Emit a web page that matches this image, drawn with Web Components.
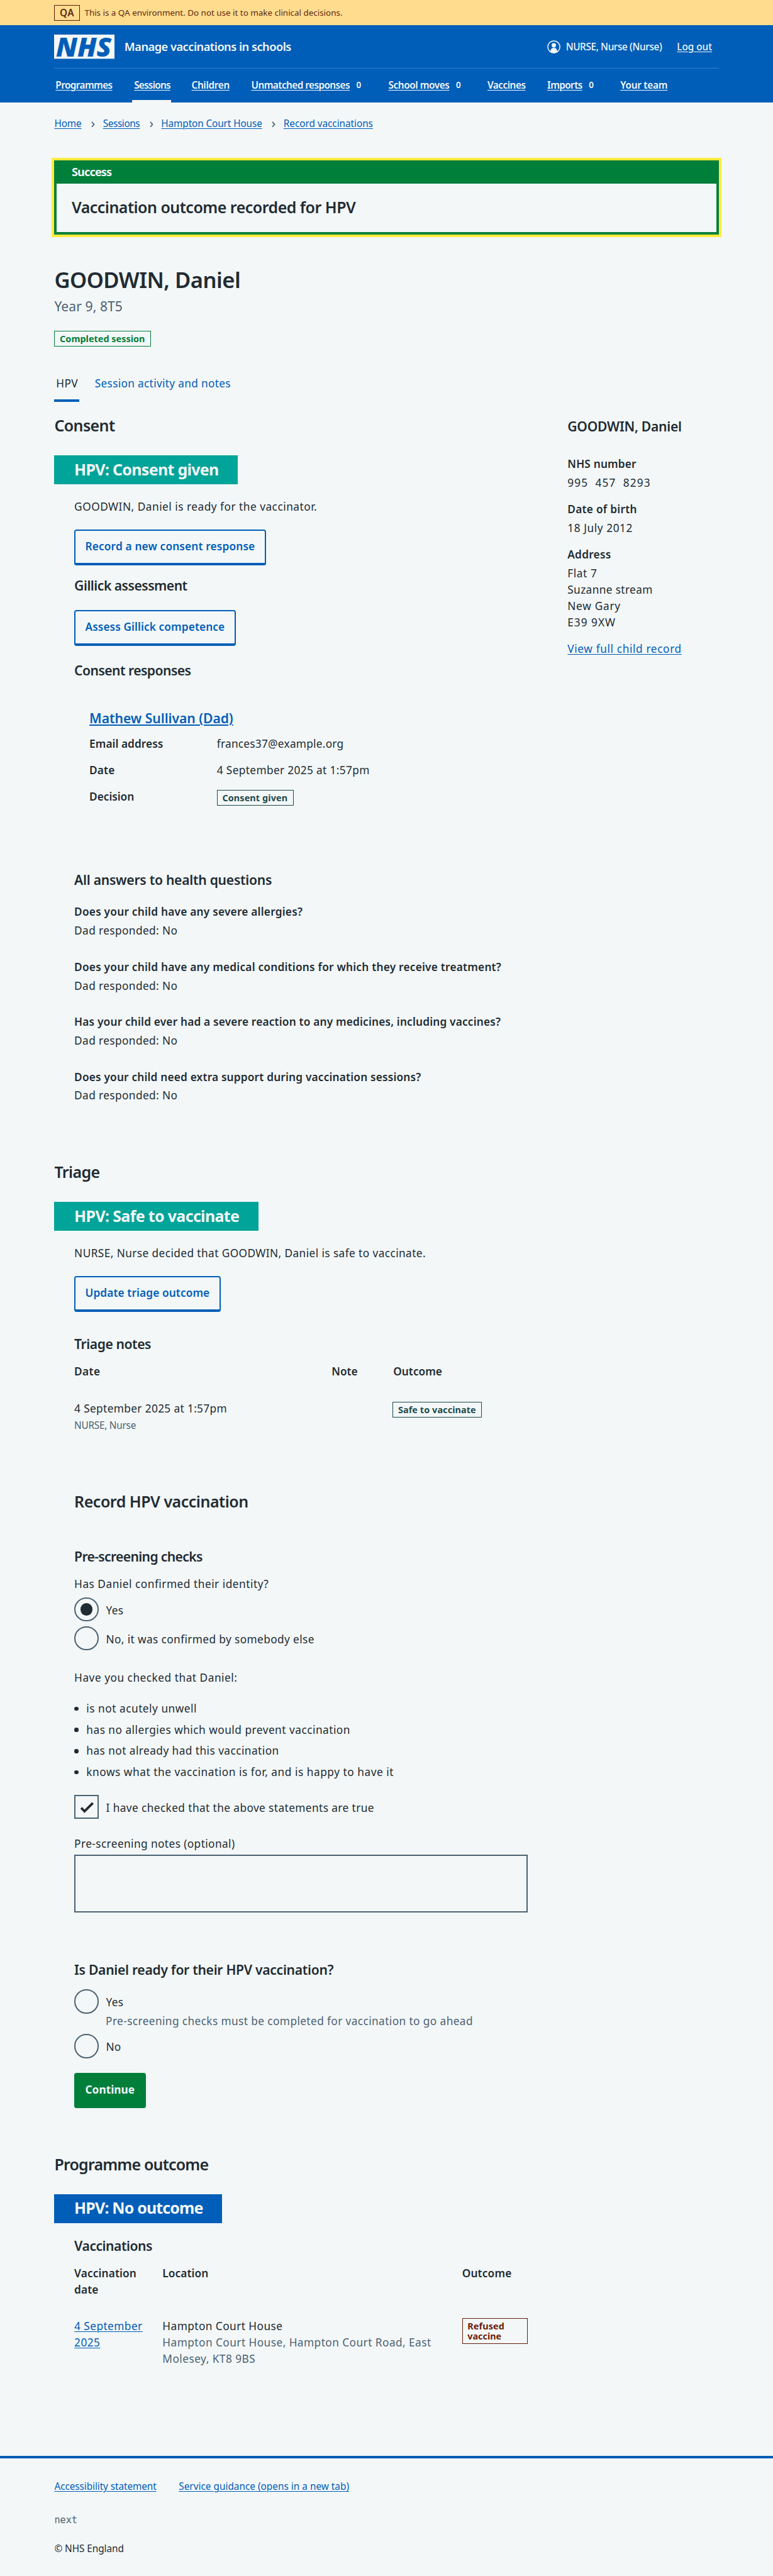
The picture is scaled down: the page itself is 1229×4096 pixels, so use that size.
<!DOCTYPE html>
<html lang="en">
<head>
<meta charset="utf-8">
<title>Manage vaccinations in schools</title>
<style>
  html, body { margin: 0; padding: 0; background: #f3f7f8; }
  body { height: 4096px; overflow: hidden; }
</style>
</head>
<body>
<app-page>
  <qa-banner></qa-banner>
  <app-header></app-header>
  <page-width>
    <app-breadcrumb></app-breadcrumb>
    <success-banner>
      <ui-text slot="title" k="m" w="65" b="700" tone="paper">Success</ui-text>
      <ui-text k="l" w="469" b="600">Vaccination outcome recorded for HPV</ui-text>
    </success-banner>
    <ui-text k="xl" w="307" b="600" mt="53.5">GOODWIN, Daniel</ui-text>
    <ui-text k="h" w="112" tone="muted" mt="7.5">Year 9, 8T5</ui-text>
    <ui-tag mt="25" w="140" tone="green">Completed session</ui-tag>
    <tab-bar></tab-bar>
    <page-columns>
      <ui-text k="l" w="99" b="600" mt="22">Consent</ui-text>
      <status-card tone="teal" mt="33">
        <ui-text slot="head" k="l" w="238" b="700" tone="paper">HPV: Consent given</ui-text>
        <ui-text w="401" mt="24">GOODWIN, Daniel is ready for the vaccinator.</ui-text>
        <ui-button mt="24" w="280">Record a new consent response</ui-button>
        <ui-text k="h" w="186" b="600" mt="19">Gillick assessment</ui-text>
        <ui-button mt="25" w="230">Assess Gillick competence</ui-button>
        <ui-text k="h" w="192" b="600" mt="27">Consent responses</ui-text>
        <consent-response></consent-response>
        <ui-text k="h" w="326" b="600" mt="109">All answers to health questions</ui-text>
        <ui-text w="377" b="600" mt="25">Does your child have any severe allergies?</ui-text>
        <ui-text w="170" mt="4">Dad responded: No</ui-text>
        <ui-text w="706" b="600" mt="33">Does your child have any medical conditions for which they receive treatment?</ui-text>
        <ui-text w="170" mt="4">Dad responded: No</ui-text>
        <ui-text w="705" b="600" mt="33">Has your child ever had a severe reaction to any medicines, including vaccines?</ui-text>
        <ui-text w="170" mt="4">Dad responded: No</ui-text>
        <ui-text w="573" b="600" mt="33">Does your child need extra support during vaccination sessions?</ui-text>
        <ui-text w="170" mt="4">Dad responded: No</ui-text>
      </status-card>
      <ui-text k="l" w="74" b="600" mt="95.5">Triage</ui-text>
      <status-card tone="teal" mt="32.5">
        <ui-text slot="head" k="l" w="272" b="700" tone="paper">HPV: Safe to vaccinate</ui-text>
        <ui-text w="581" mt="24">NURSE, Nurse decided that GOODWIN, Daniel is safe to vaccinate.</ui-text>
        <ui-button mt="24" w="205">Update triage outcome</ui-button>
        <ui-text k="h" w="126" b="600" mt="39">Triage notes</ui-text>
        <ui-grid cols="426px 102px auto" mt="17">
          <ui-text w="42" b="600">Date</ui-text><ui-text w="42" b="600">Note</ui-text><ui-text w="80" b="600">Outcome</ui-text>
        </ui-grid>
        <ui-grid cols="425px 102px auto" mt="34">
          <ui-group>
            <ui-text w="252">4 September 2025 at 1:57pm</ui-text>
            <ui-text k="s" w="101" tone="muted" mt="2.5">NURSE, Nurse</ui-text>
          </ui-group>
          <ui-group></ui-group>
          <ui-tag w="128" mt="2" tone="aqua">Safe to vaccinate</ui-tag>
        </ui-grid>
        <ui-text k="l" w="287" b="600" mt="97">Record HPV vaccination</ui-text>
        <ui-text k="h" w="211" b="600" mt="59.5">Pre-screening checks</ui-text>
        <ui-text w="321" mt="17">Has Daniel confirmed their identity?</ui-text>
        <ui-choice kind="radio" checked mt="8"><ui-text w="28">Yes</ui-text></ui-choice>
        <ui-choice kind="radio" mt="8"><ui-text w="344">No, it was confirmed by somebody else</ui-text></ui-choice>
        <ui-text w="269" mt="32">Have you checked that Daniel:</ui-text>
        <bullet-item mt="24"><ui-text w="182">is not acutely unwell</ui-text></bullet-item>
        <bullet-item mt="8"><ui-text w="436">has no allergies which would prevent vaccination</ui-text></bullet-item>
        <bullet-item mt="8"><ui-text w="318">has not already had this vaccination</ui-text></bullet-item>
        <bullet-item mt="8"><ui-text w="508">knows what the vaccination is for, and is happy to have it</ui-text></bullet-item>
        <ui-choice kind="checkbox" checked mt="24"><ui-text w="443">I have checked that the above statements are true</ui-text></ui-choice>
        <ui-text w="265" mt="28">Pre-screening notes (optional)</ui-text>
        <notes-field mt="4"></notes-field>
        <ui-text k="h" w="428" b="600" mt="80">Is Daniel ready for their HPV vaccination?</ui-text>
        <ui-choice kind="radio" mt="17"><ui-text w="28">Yes</ui-text></ui-choice>
        <ui-hint><ui-text w="607" tone="muted">Pre-screening checks must be completed for vaccination to go ahead</ui-text></ui-hint>
        <ui-choice kind="radio" mt="8"><ui-text w="24">No</ui-text></ui-choice>
        <ui-button primary mt="24" w="81">Continue</ui-button>
      </status-card>
      <ui-text k="l" w="254" b="600" mt="75.5">Programme outcome</ui-text>
      <status-card tone="blue" mt="32.5">
        <ui-text slot="head" k="l" w="212" b="700" tone="paper">HPV: No outcome</ui-text>
        <ui-text k="h" w="128" b="600" mt="23">Vaccinations</ui-text>
        <ui-grid cols="146px 496px 109px" mt="17">
          <ui-group><ui-text w="102" b="600">Vaccination</ui-text><ui-text w="39" b="600">date</ui-text></ui-group>
          <ui-text w="75" b="600">Location</ui-text><ui-text w="81" b="600">Outcome</ui-text>
        </ui-grid>
        <ui-grid cols="146px 496px 109px" mt="34">
          <ui-group><ui-text w="112" tone="link">4 September</ui-text><ui-text w="42" tone="link">2025</ui-text></ui-group>
          <ui-group>
            <ui-text w="198">Hampton Court House</ui-text>
            <ui-text w="444" tone="muted">Hampton Court House, Hampton Court Road, East</ui-text>
            <ui-text w="153" tone="muted">Molesey, KT8 9BS</ui-text>
          </ui-group>
          <ui-tag tone="red" wide w="60"><ui-text k="t" b="700" w="60">Refused</ui-text><ui-text k="t" b="700" w="55">vaccine</ui-text></ui-tag>
        </ui-grid>
      </status-card>
      <child-summary slot="aside"></child-summary>
    </page-columns>
  </page-width>
  <app-footer></app-footer>
</app-page>

<script>
const tones = { ink: '#212b32', muted: '#4c6272', paper: '#f3f7f8', link: '#005eb8', blue: '#005eb8', green: '#007f3b', teal: '#00a499', aqua: '#1d4a4b', red: '#6b1d0a' };

function define(name, html, setup) {
  const tpl = document.createElement('template');
  tpl.innerHTML = '<style>:host{display:block;box-sizing:border-box}*{box-sizing:border-box}</style>' + html;
  customElements.define(name, class extends HTMLElement {
    connectedCallback() {
      if (this.shadowRoot) return;
      this.attachShadow({ mode: 'open' }).append(tpl.content.cloneNode(true));
      if (this.hasAttribute('mt')) this.style.marginTop = this.getAttribute('mt') + 'px';
      const t = this.getAttribute('tone');
      if (t) this.style.setProperty('--tone', tones[t]);
      if (setup) setup(this, this.shadowRoot);
    }
  });
}

/* Tracks a line of text so that it sets to the given measure. */
function track(span, text, width) {
  const probe = document.createElement('span');
  probe.style.cssText = 'display:block;width:100px;height:0;overflow:hidden';
  document.querySelector('app-page').append(probe);
  const f = probe.getBoundingClientRect().width / 100;
  probe.remove();
  span.style.letterSpacing = '0px';
  const now = span.getBoundingClientRect().width / f;
  if (now > 0) span.style.letterSpacing = ((width + 1 - now) / text.length).toFixed(4) + 'px';
}

define('app-page', `<style>
  :host{zoom:.9604;height:4266px;color:#212b32;background:#f3f7f8;font:400 18px/27px "Noto Sans","Open Sans",sans-serif}
</style><slot></slot>`);

define('page-width', `<style>:host{width:1100px;margin:0 auto 0 90px}</style><slot></slot>`);

define('ui-text', `<style>
  :host{color:var(--tone,#212b32);white-space:nowrap;font-size:18px;line-height:27px}
  :host([k=xl]){font-size:36px;line-height:44px}
  :host([k=l]){font-size:26px;line-height:34px}
  :host([k=h]){font-size:22px;line-height:30px}
  :host([k=m]){font-size:19px;line-height:38px}
  :host([k=s]){font-size:16px;line-height:24px}
  :host([k=q]){font-size:14px;line-height:24px}
  :host([k=t]){font-size:15px;line-height:16px;color:inherit}
  :host([tone=link]) span,:host([u]) span{text-decoration:underline;text-decoration-thickness:1.1px;text-underline-offset:2px}
  :host([k=h][tone=link]) span{text-decoration-thickness:2px}
</style><span><slot></slot></span>`, (el, root) => {
  const span = root.querySelector('span');
  if (el.hasAttribute('b')) el.style.fontWeight = el.getAttribute('b');
  if (el.getAttribute('w')) track(span, el.textContent, +el.getAttribute('w'));
});

define('ui-tag', `<style>
  :host{width:fit-content;height:26px;border:1.1px solid var(--tone);color:var(--tone);padding:0 9px 0 8px;font:700 15px/25px "Noto Sans";white-space:nowrap}
  :host([wide]){width:109px;height:42px;padding-top:4px;line-height:16px}
</style><span><slot></slot></span>`, (el, root) => {
  if (!el.hasAttribute('wide')) track(root.querySelector('span'), el.textContent, +el.getAttribute('w'));
});

define('ui-button', `<style>
  :host{width:fit-content;height:59px;border:2.1px solid #005eb8;border-bottom-width:4.2px;border-radius:4px;color:#005eb8;padding:0 16px;font-weight:600;font-size:18px;line-height:53px;white-space:nowrap}
  :host([primary]){background:#007f3b;border-color:#007f3b;color:#f3f7f8;font-weight:700}
</style><span><slot></slot></span>`, (el, root) => track(root.querySelector('span'), el.textContent, +el.getAttribute('w')));

define('ui-grid', `<style>:host{display:grid;align-items:start}</style><slot></slot>`,
  el => { el.style.gridTemplateColumns = el.getAttribute('cols'); });
define('ui-group', `<slot></slot>`);
define('ui-hint', `<style>:host{margin:-1px 0 0 52px}</style><slot></slot>`);

define('status-card', `<style>
  header{width:fit-content;height:48px;padding:6px 32px 0 33px;background:var(--tone)}
  .body{padding-left:33px}
</style><header><slot name="head"></slot></header><div class="body"><slot></slot></div>`,
  el => { for (const c of el.children) if (!c.hasAttribute('tone')) c.style.setProperty('--tone', '#212b32'); });

define('ui-choice', `<style>
  :host{display:flex;gap:12.5px;height:40px}
  .box{width:40px;height:40px;border:2.1px solid #4c6272;display:grid;place-items:center}
  :host([kind=radio]) .box{border-radius:50%}
  svg{display:none;width:36px;height:36px;flex:none}
  :host([kind=checkbox][checked]) svg{display:block}
  .dot{display:none;width:20px;height:20px;border-radius:50%;background:#212b32}
  :host([kind=radio][checked]) .dot{display:block}
  .label{padding-top:8px}
</style><div class="box"><i class="dot"></i><svg viewBox="0 0 36 36"><path d="M9.5 19.5 15 25 28.8 11.3" fill="none" stroke="#212b32" stroke-width="4"/></svg></div><div class="label"><slot></slot></div>`);

define('bullet-item', `<style>
  :host{display:flex;align-items:center;gap:13px}
  i{width:7px;height:7px;border-radius:50%;background:#212b32}
</style><i></i><slot></slot>`);

define('notes-field', `<style>:host{width:751px;height:96px;border:2.1px solid #4c6272}</style>`);

define('page-columns', `<style>
  :host{display:grid;grid-template-columns:849.5px 250.5px;align-items:start}
</style><main><slot></slot></main><aside><slot name="aside"></slot></aside>`);

define('qa-banner', `<style>
  :host{display:flex;align-items:center;gap:8px;height:42px;padding-left:90px;background:#ffdc8e;--tone:#5c2a12}
  .tag{height:26px;width:42px;border:1.1px solid #5c1a0a;display:grid;place-items:center}
  .tag ui-text{line-height:24px}
</style><div class="tag"><ui-text k="s" w="23" b="600">QA</ui-text></div><ui-text k="q" w="426">This is a QA environment. Do not use it to make clinical decisions.</ui-text>`);

define('app-header', `<style>
  :host{height:128px;background:#005eb8;padding:0 90px;--tone:#f3f7f8}
  .top{display:flex;align-items:center;height:72px;border-bottom:1.1px solid rgba(255,255,255,.2)}
  .logo{width:100px;height:40px;display:block;overflow:visible}
  .name{margin-left:16px}
  .user{display:flex;align-items:center;margin:0 11px 0 auto}
  .user svg{width:22px;height:22px;margin-right:9px}
  .out{margin-left:25px}
  nav{display:grid;grid-template-columns:130px 95px 99px 227px 164px 99px 121px auto;margin-left:2px}
  .item{display:flex;gap:11px;height:56px;padding-top:15px}
  .item.on{margin-left:-3px;padding-left:3px;width:64px;border-bottom:4.2px solid #f3f7f8}
</style>
<div class="top">
  <svg class="logo" viewBox="0 0 100 40"><rect width="100" height="40" fill="#f3f7f8"/><text x="3" y="36" font-family="Noto Sans" font-weight="900" font-style="italic" font-size="45" textLength="92" lengthAdjust="spacingAndGlyphs" fill="#005eb8">NHS</text></svg>
  <ui-text class="name" k="m" w="275" b="600">Manage vaccinations in schools</ui-text>
  <div class="user">
    <svg viewBox="0 0 22 22"><circle cx="11" cy="11" r="10" fill="none" stroke="#f3f7f8" stroke-width="1.6"/><circle cx="11" cy="8.3" r="3.6" fill="#f3f7f8"/><path d="M5.5 19.4v-1.7a5.5 5.2 0 0 1 11 0v1.7Q11 23 5.5 19.4Z" fill="#f3f7f8"/></svg>
    <ui-text k="s" w="158" b="500">NURSE, Nurse (Nurse)</ui-text>
    <ui-text class="out" k="s" w="57" b="500" u>Log out</ui-text>
  </div>
</div>
<nav>
  <div class="item"><ui-text k="s" w="93" b="600" u>Programmes</ui-text></div>
  <div class="item on"><ui-text k="s" w="59" b="600" u>Sessions</ui-text></div>
  <div class="item"><ui-text k="s" w="62" b="600" u>Children</ui-text></div>
  <div class="item"><ui-text k="s" w="162" b="600" u>Unmatched responses</ui-text><ui-text k="q" w="8" b="600">0</ui-text></div>
  <div class="item"><ui-text k="s" w="100" b="600" u>School moves</ui-text><ui-text k="q" w="8" b="600">0</ui-text></div>
  <div class="item"><ui-text k="s" w="62" b="600" u>Vaccines</ui-text></div>
  <div class="item"><ui-text k="s" w="57" b="600" u>Imports</ui-text><ui-text k="q" w="8" b="600">0</ui-text></div>
  <div class="item"><ui-text k="s" w="77" b="600" u>Your team</ui-text></div>
</nav>`);

define('app-breadcrumb', `<style>
  :host{display:flex;align-items:center;padding-top:23px;--tone:#005eb8}
  svg{width:6px;height:10px;margin:1px 13.500px 0 16px;fill:none;stroke:#4c6272;stroke-width:1.8;flex:none}
</style><ui-text k="s" w="44" u>Home</ui-text><svg viewBox="0 0 6 10"><path d="M1 .8 4.8 5 1 9.2"/></svg><ui-text k="s" w="60" u>Sessions</ui-text><svg viewBox="0 0 6 10"><path d="M1 .8 4.8 5 1 9.2"/></svg><ui-text k="s" w="166" u>Hampton Court House</ui-text><svg viewBox="0 0 6 10"><path d="M1 .8 4.8 5 1 9.2"/></svg><ui-text k="s" w="147" u>Record vaccinations</ui-text>`);

define('success-banner', `<style>
  :host{height:122px;margin-top:49px;border:4.2px solid #007f3b;border-top:0;outline:4.2px solid #ffeb3b}
  header{height:38px;background:#007f3b;padding-left:24.5px}
  .body{padding:22px 0 0 24.5px}
</style><header><slot name="title"></slot></header><div class="body"><slot></slot></div>`);

define('tab-bar', `<style>
  :host{display:flex;gap:23px;margin-top:47.5px}
  .tab{height:43.5px;padding:0 3px}
  .on{width:41px;border-bottom:4.2px solid #005eb8}
  .other{--tone:#005eb8}
</style><div class="tab on"><ui-text w="35">HPV</ui-text></div><div class="tab other"><ui-text w="224">Session activity and notes</ui-text></div>`);

define('consent-response', `<style>
  :host{padding:49px 0 0 25px}
  dl{display:grid;grid-template-columns:211px auto;row-gap:17px;margin:13px 0 0}
  dt,dd{margin:0;height:27px}
</style>
<ui-text k="h" w="237" b="600" tone="link">Mathew Sullivan (Dad)</ui-text>
<dl><dt><ui-text w="121" b="600">Email address</ui-text></dt><dd><ui-text w="209">frances37@example.org</ui-text></dd>
<dt><ui-text w="41" b="600">Date</ui-text></dt><dd><ui-text w="252">4 September 2025 at 1:57pm</ui-text></dd>
<dt><ui-text w="73" b="600">Decision</ui-text></dt><dd><ui-tag mt="2" tone="aqua" w="107">Consent given</ui-tag></dd></dl>`);

define('child-summary', `<style>:host{padding-top:27px}</style>
<ui-text k="h" w="188" b="600">GOODWIN, Daniel</ui-text>
<ui-text w="113" b="600" mt="33">NHS number</ui-text><ui-text w="137" mt="4">995&nbsp; 457&nbsp; 8293</ui-text>
<ui-text w="114" b="600" mt="17">Date of birth</ui-text><ui-text w="107" mt="4">18 July 2012</ui-text>
<ui-text w="71" b="600" mt="17">Address</ui-text><ui-text w="48" mt="4">Flat 7</ui-text>
<ui-text w="140">Suzanne stream</ui-text><ui-text w="87">New Gary</ui-text><ui-text w="79">E39 9XW</ui-text>
<ui-text w="188" mt="17" tone="link">View full child record</ui-text>`);

define('app-footer', `<style>
  :host{margin-top:147px;border-top:4.2px solid #005eb8;padding:34px 90px 0}
  .links{display:flex;gap:37px}
  .next{font-family:"DejaVu Sans Mono"}
</style>
<div class="links"><ui-text k="s" w="168" tone="link">Accessibility statement</ui-text><ui-text k="s" w="281" tone="link">Service guidance (opens in a new tab)</ui-text></div>
<ui-text class="next" k="s" w="37" tone="muted" mt="32">next</ui-text>
<ui-text k="s" w="114" mt="23">© NHS England</ui-text>`);
</script>
</body>
</html>
